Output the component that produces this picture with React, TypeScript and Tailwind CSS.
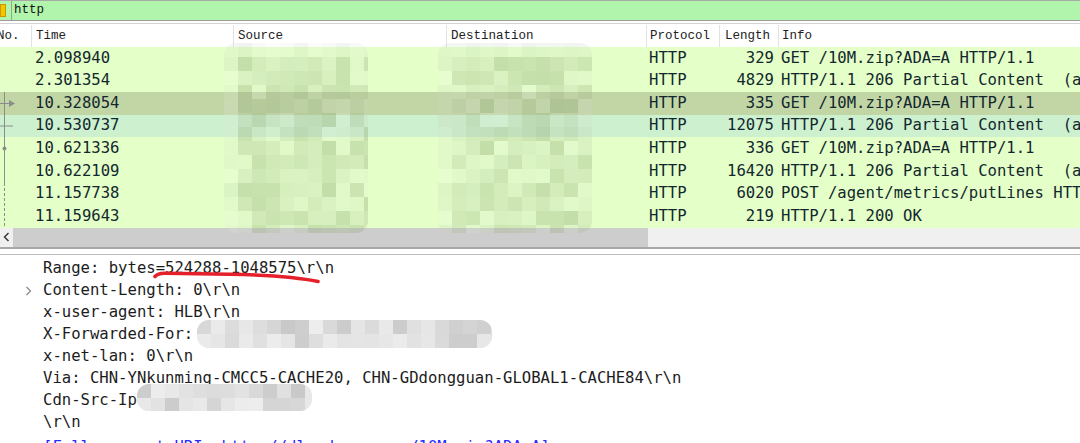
import React from 'react'

type Row = { time: string; len: string; info: string; bg: string }

const packets: Row[] = [
  { time: '2.098940', len: '329', info: 'GET /10M.zip?ADA=A HTTP/1.1', bg: 'bg-[#e4ffc7]' },
  { time: '2.301354', len: '4829', info: 'HTTP/1.1 206 Partial Content  (application/zip)', bg: 'bg-[#e4ffc7]' },
  { time: '10.328054', len: '335', info: 'GET /10M.zip?ADA=A HTTP/1.1', bg: 'bg-[#c2d6a5]' },
  { time: '10.530737', len: '12075', info: 'HTTP/1.1 206 Partial Content  (application/zip)', bg: 'bg-[#cdf0ce]' },
  { time: '10.621336', len: '336', info: 'GET /10M.zip?ADA=A HTTP/1.1', bg: 'bg-[#e4ffc7]' },
  { time: '10.622109', len: '16420', info: 'HTTP/1.1 206 Partial Content  (application/zip)', bg: 'bg-[#e4ffc7]' },
  { time: '11.157738', len: '6020', info: 'POST /agent/metrics/putLines HTTP/1.1', bg: 'bg-[#e4ffc7]' },
  { time: '11.159643', len: '219', info: 'HTTP/1.1 200 OK', bg: 'bg-[#e4ffc7]' },
]

const headerFont = { fontFamily: '"Liberation Mono", "DejaVu Sans Mono", monospace' }
const monoFont = { fontFamily: '"DejaVu Sans Mono", "Liberation Mono", monospace' }

// small deterministic random so the redaction blocks look the same every run
function rng(seed: number) {
  let s = seed
  return () => {
    s = (s * 9301 + 49297) % 233280
    return s / 233280
  }
}

function Mosaic({ cols, rows, seed, tone, className }: { cols: number; rows: number; seed: number; tone: 'green' | 'gray'; className: string }) {
  const rand = rng(seed)
  const grid = Array.from({ length: rows }, (_, r) =>
    Array.from({ length: cols }, (_, c) => {
      const v = rand()
      if (tone === 'green') {
        const edge = c === 0 || r === 0 ? 0.35 : 1
        return `rgba(70,110,30,${(0.03 + v * 0.2) * edge})`
      }
      const g = Math.round(200 + v * 38)
      return `rgb(${g},${g},${g})`
    })
  )
  return (
    <div className={`absolute overflow-hidden rounded-[12px] ${tone === 'green' ? 'bg-[rgba(255,255,255,0.2)]' : 'bg-[#ededed]'} ${className}`}>
      {grid.map((row, r) => (
        <div key={r} className="flex">
          {row.map((color, c) => (
            <div key={c} className="h-[14px] w-[14px] shrink-0" style={{ background: color }} />
          ))}
        </div>
      ))}
    </div>
  )
}

export default function App() {
  return (
    <div className="relative h-[443px] w-[1080px] overflow-hidden bg-white">
      {/* Display filter */}
      <div className="flex h-[20px] items-center border-t border-[#a8a8a8] bg-[#b1f5ad]">
        <div className="h-[13px] w-[6px] border border-[#c79a00] bg-[#f3c400]" />
        <div className="ml-[5px] h-full w-px bg-[#8fa88c]" />
        <span className="ml-[2px] text-[12.5px] text-[#111]" style={headerFont}>http</span>
      </div>
      <div className="h-[4px] border-t border-b border-t-[#9c9c9c] border-b-[#d4d4d4] bg-white" />

      {/* Column header */}
      <div className="flex h-[23px] items-center whitespace-nowrap bg-white pt-[1px] text-[12.5px] text-[#222]" style={headerFont}>
        <div className="-ml-[3px] w-[34px] shrink-0">No.</div>
        <div className="flex h-full w-[202px] shrink-0 items-center border-l border-[#e2e2e2] pl-[4px]">Time</div>
        <div className="flex h-full w-[213px] shrink-0 items-center border-l border-[#e2e2e2] pl-[4px]">Source</div>
        <div className="flex h-full w-[200px] shrink-0 items-center border-l border-[#e2e2e2] pl-[4px]">Destination</div>
        <div className="flex h-full w-[73px] shrink-0 items-center border-l border-[#e2e2e2] pl-[3px]">Protocol</div>
        <div className="flex h-full w-[59px] shrink-0 items-center border-l border-[#e2e2e2] pl-[5px]">Length</div>
        <div className="flex h-full flex-1 items-center border-l border-[#e2e2e2] pl-[3px]">Info</div>
      </div>

      {/* Packet list */}
      <div className="text-[15.6px] text-[#12272e]" style={monoFont}>
        {packets.map((p) => (
          <div key={p.time} className={`flex h-[22.6px] items-center whitespace-pre ${p.bg}`}>
            <div className="w-[31px] shrink-0" />
            <div className="w-[202px] shrink-0 pl-[4px]">{p.time}</div>
            <div className="w-[213px] shrink-0" />
            <div className="w-[200px] shrink-0" />
            <div className="w-[73px] shrink-0 pl-[3px]">HTTP</div>
            <div className="w-[59px] shrink-0 pr-[4px] text-right">{p.len}</div>
            <div className="flex-1 pl-[3px]">{p.info}</div>
          </div>
        ))}
      </div>

      {/* Horizontal scrollbar */}
      <div className="flex h-[19px] bg-[#f0f0f0]">
        <div className="flex w-[13px] shrink-0 items-center justify-center">
          <svg width="7" height="10" viewBox="0 0 7 10">
            <path d="M5.5 1 L1.5 5 L5.5 9" fill="none" stroke="#333" strokeWidth="1.4" />
          </svg>
        </div>
        <div className="w-[635px] shrink-0 bg-[#cdcdcd]" />
      </div>
      <div className="h-[8px] border-t-2 border-b border-t-[#a8a8a8] border-b-[#bcbcbc] bg-white" />

      {/* Packet details */}
      <div className="pt-[3px] text-[15.6px] text-[#1c1c1c]" style={monoFont}>
        {[
          { text: 'Range: bytes=524288-1048575\\r\\n' },
          { text: 'Content-Length: 0\\r\\n', exp: true },
          { text: 'x-user-agent: HLB\\r\\n' },
          { text: 'X-Forwarded-For: ' },
          { text: 'x-net-lan: 0\\r\\n' },
          { text: 'Via: CHN-YNkunming-CMCC5-CACHE20, CHN-GDdongguan-GLOBAL1-CACHE84\\r\\n' },
          { text: 'Cdn-Src-Ip' },
          { text: '\\r\\n' },
          { text: '[Full request URI: http://dl.cdn.com.cn/10M.zip?ADA=A]', link: true },
        ].map((l, i) => (
          <div key={i} className={`flex h-[22px] items-center whitespace-pre ${l.link ? 'mt-[3px]' : ''}`}>
            <span className="flex w-[43px] shrink-0 justify-end pr-[11px]">
              {l.exp && (
                <svg width="7" height="10" viewBox="0 0 7 10">
                  <path d="M1.5 1 L5.5 5 L1.5 9" fill="none" stroke="#8a8a8a" strokeWidth="1.3" />
                </svg>
              )}
            </span>
            <span className={l.link ? 'text-[#2b2bff]' : ''}>{l.text}</span>
          </div>
        ))}
      </div>

      {/* Redactions */}
      <Mosaic tone="green" seed={11} cols={11} rows={14} className="left-[224px] top-[43px] h-[190px] w-[144px]" />
      <Mosaic tone="green" seed={37} cols={12} rows={14} className="left-[438px] top-[43px] h-[190px] w-[154px]" />
      <Mosaic tone="gray" seed={5} cols={22} rows={2} className="left-[197px] top-[320px] h-[28px] w-[295px]" />
      <Mosaic tone="gray" seed={23} cols={13} rows={2} className="left-[137px] top-[384px] h-[27px] w-[175px]" />

      {/* Related-packet marks and the hand drawn underline */}
      <svg className="pointer-events-none absolute left-0 top-0" width="1080" height="443">
        <line x1="4.5" y1="92" x2="4.5" y2="183" stroke="#8c8c8c" strokeWidth="1" />
        <line x1="4.5" y1="183" x2="4.5" y2="228" stroke="#8c8c8c" strokeWidth="1" strokeDasharray="3 2" />
        <line x1="0" y1="103.5" x2="10" y2="103.5" stroke="#8c8c8c" strokeWidth="1" />
        <path d="M9 100 L15 103.5 L9 107 Z" fill="#8c8c8c" />
        <line x1="0" y1="126" x2="13" y2="126" stroke="#8c8c8c" strokeWidth="1" />
        <circle cx="4.5" cy="148.5" r="2" fill="#8c8c8c" />
        <path d="M155 276.5 Q158 273 165 273.2 L230 274.2 Q290 275.5 318 281.5" fill="none" stroke="#e5202a" strokeWidth="3.6" strokeLinecap="round" />
      </svg>
    </div>
  )
}
